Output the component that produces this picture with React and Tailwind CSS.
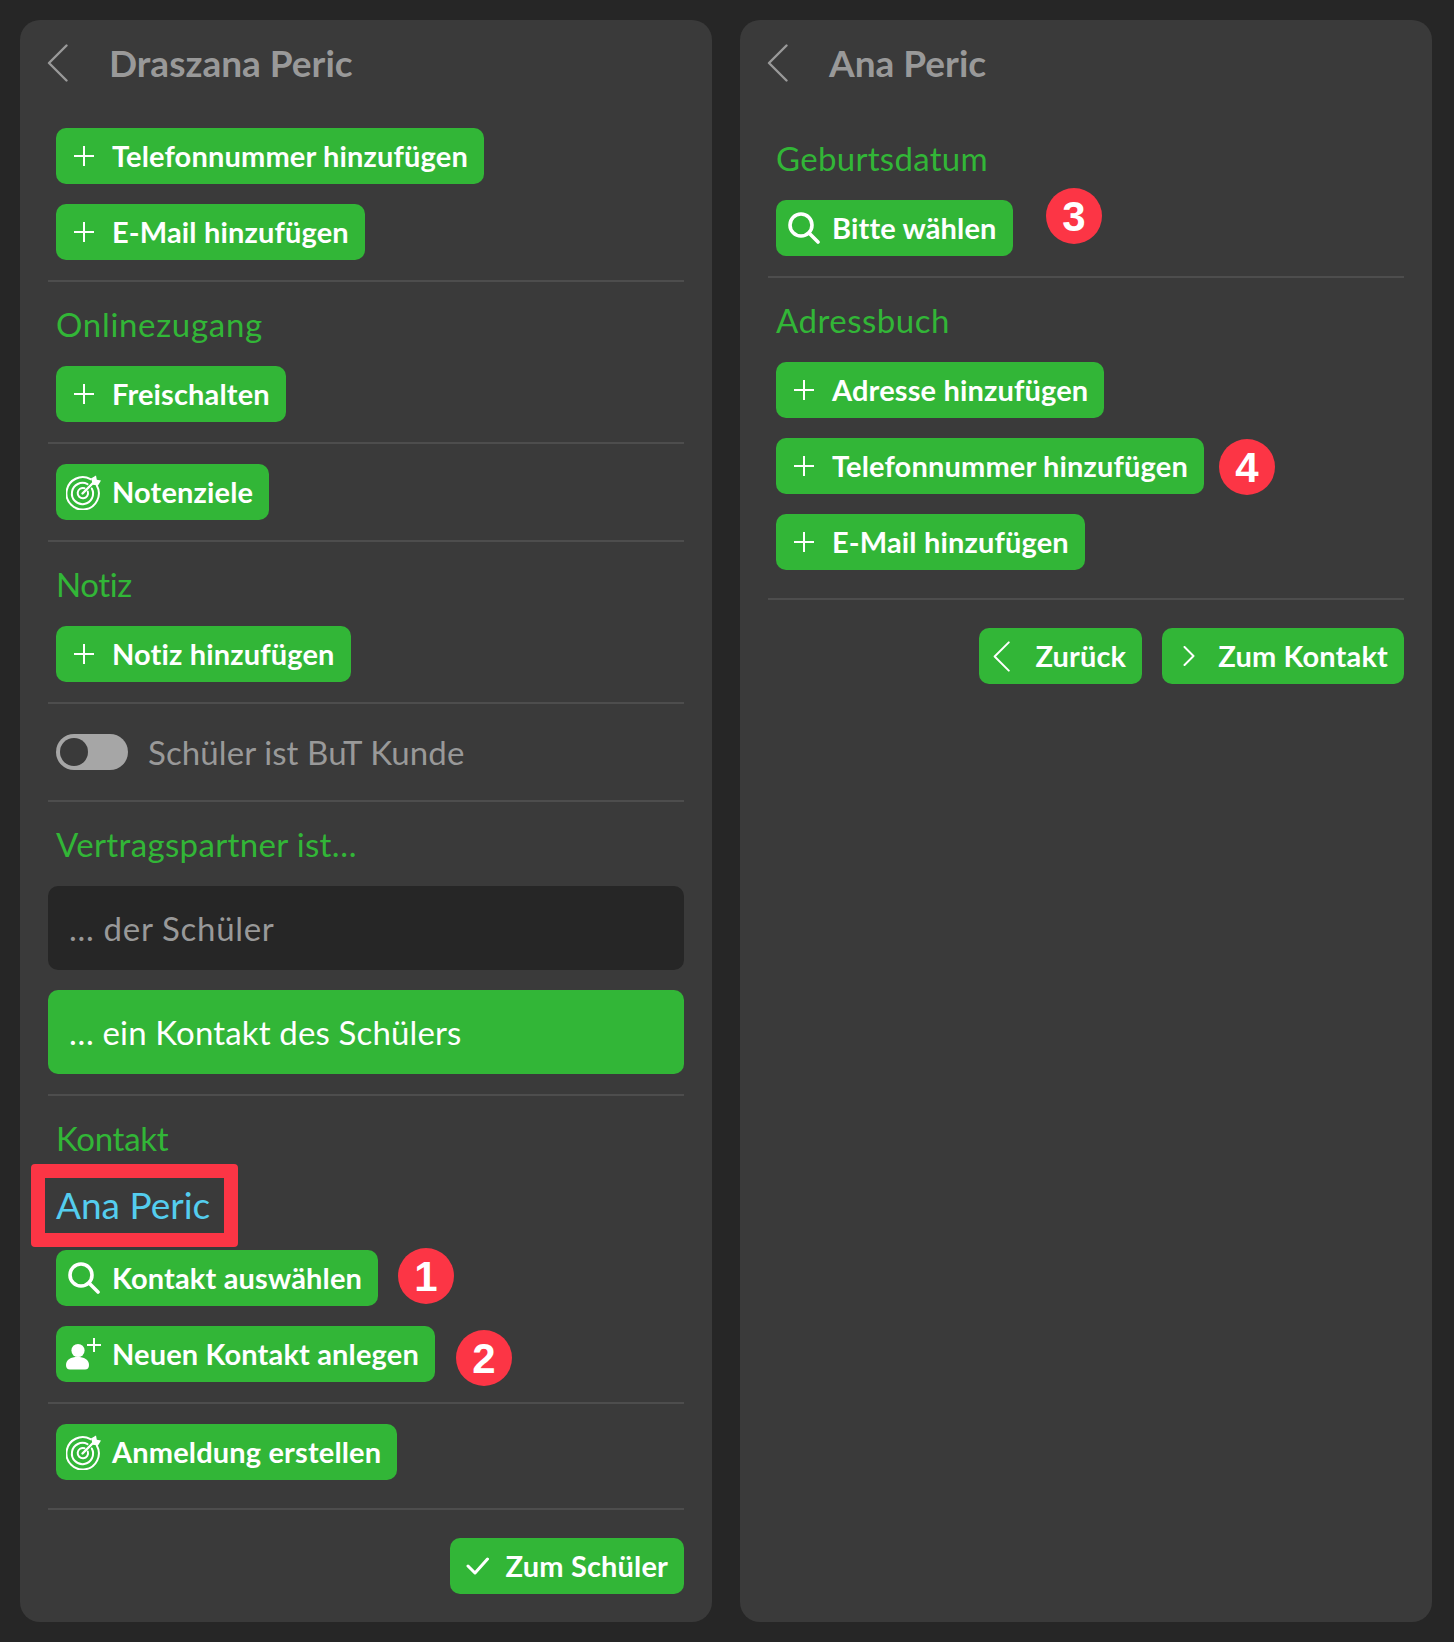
const FONT = "font-['Lato','Liberation_Sans',sans-serif]";

const Plus = () => (
  <svg width="20" height="20" viewBox="0 0 20 20" fill="none" stroke="currentColor" strokeWidth="2"><path d="M10 0v20M0 10h20" /></svg>
);
const Search = () => (
  <svg width="32" height="32" viewBox="0 0 32 32" fill="none" stroke="currentColor" strokeWidth="3.6" strokeLinecap="round"><circle cx="13" cy="13" r="11" /><path d="M21 21l9 9" /></svg>
);
const Target = () => (
  <svg width="36" height="36" viewBox="0 0 36 36" fill="none" stroke="currentColor" strokeWidth="2" strokeLinecap="round">
    <path d="M24.5 5.2A16.2 16.2 0 1 0 30.8 11.5" />
    <path d="M21.5 10.2A10.6 10.6 0 1 0 25.8 14.5" />
    <path d="M18.5 14.2A5.2 5.2 0 1 0 21.8 17.5" />
    <path d="M16.5 19.5L27 9" strokeWidth="2.4" />
    <path d="M25 4.5l5-3 .8 4.2 4.2.8-3 5-5-.8z" fill="currentColor" stroke="none" />
  </svg>
);
const UserPlus = () => (
  <svg width="36" height="32" viewBox="0 0 36 32" fill="currentColor">
    <circle cx="12" cy="12.5" r="6.6" />
    <path d="M0 27c0-5.5 5-8 11.500-8S23 21.500 23 27c0 3-1.500 4.500-4 4.500H4C1.500 31.500 0 30 0 27z" />
    <path d="M28 0v14M21 7h14" fill="none" stroke="currentColor" strokeWidth="2" />
  </svg>
);
const Back = ({ w = 21, h = 38 }) => (
  <svg width={w} height={h} viewBox="0 0 21 38" fill="none" stroke="currentColor" strokeWidth="2.4" strokeLinecap="round" strokeLinejoin="round"><path d="M19.500 1.500L2 19l17.500 17.500" /></svg>
);
const Forward = () => (
  <svg width="12" height="20" viewBox="0 0 12 20" fill="none" stroke="currentColor" strokeWidth="2" strokeLinecap="round" strokeLinejoin="round"><path d="M1.500 1l9 9-9 9" /></svg>
);
const Check = () => (
  <svg width="23" height="18" viewBox="0 0 23 18" fill="none" stroke="currentColor" strokeWidth="3" strokeLinecap="round" strokeLinejoin="round"><path d="M2 9l7 7L21.500 2" /></svg>
);

const Btn = ({ icon, children, iconClass = "justify-center" }) => (
  <div className="flex h-[56px] w-fit items-center rounded-[10px] bg-[#32b637] pr-[16px] text-[29px] font-bold tracking-[0.15px] whitespace-nowrap text-white">
    <span className={`flex w-[56px] shrink-0 items-center ${iconClass}`}>{icon}</span>
    <span>{children}</span>
  </div>
);

const Row = ({ icon, label, badge, badgeX, badgeY = 0 }) => (
  <div className="relative ml-[8px]">
    <Btn icon={icon}>{label}</Btn>
    {badge && <Badge x={badgeX} y={badgeY}>{badge}</Badge>}
  </div>
);

const Badge = ({ x, y, children }) => {
  return (
    <span
      className="absolute flex h-[56px] w-[56px] items-center justify-center rounded-full bg-[#fc3545] font-['Liberation_Sans',sans-serif] text-[42px] font-bold text-white"
      style={{ left: x, top: y }}
    >
      {children}
    </span>
  );
};

const Line = ({ className = "my-[20px]" }) => <div className={`h-[2px] bg-[#4d4d4d] ${className}`} />;

const Label = ({ children, className = "" }) => (
  <div className={`ml-[8px] flex h-[48px] items-center pb-[3px] text-[33px] leading-none text-[#32b637] ${className}`}>{children}</div>
);

const Header = ({ title }) => (
  <div className="flex h-[88px] items-center pb-[2px] text-[#999999]">
    <span className="ml-[27px] w-[62px]"><Back /></span>
    <span className="text-[37px] font-bold">{title}</span>
  </div>
);

const Panel = ({ children }) => (
  <div className="h-[1602px] w-[692px] rounded-[20px] bg-[#3a3a3a] px-[28px]">{children}</div>
);

export default function App() {
  return (
    <div className={`flex h-[1642px] w-[1454px] gap-[28px] bg-[#262626] p-[20px] ${FONT}`}>
      <Panel>
        <div className="-mx-[28px]"><Header title="Draszana Peric" /></div>
        <div className="mt-[20px] flex flex-col gap-[20px]">
          <Row icon={<Plus />} label="Telefonnummer hinzufügen" />
          <Row icon={<Plus />} label="E-Mail hinzufügen" />
        </div>
        <Line />
        <Label className="tracking-[0.7px]">Onlinezugang</Label>
        <div className="mt-[16px]"><Row icon={<Plus />} label="Freischalten" /></div>
        <Line />
        <Row icon={<Target />} label="Notenziele" />
        <Line />
        <Label className="-tracking-[0.4px]">Notiz</Label>
        <div className="mt-[16px]"><Row icon={<Plus />} label="Notiz hinzufügen" /></div>
        <Line />
        <div className="ml-[8px] flex h-[56px] items-center gap-[20px]">
          <div className="flex h-[36px] w-[72px] items-center rounded-full bg-[#a6a6a6] pl-[4px]">
            <div className="h-[28px] w-[28px] rounded-full bg-[#3a3a3a]" />
          </div>
          <span className="pt-[1px] text-[33px] tracking-[0.1px] text-[#999999]">Schüler ist BuT Kunde</span>
        </div>
        <Line />
        <Label className="tracking-[0.35px]">Vertragspartner ist…</Label>
        <div className="mt-[16px] flex h-[84px] items-center rounded-[10px] bg-[#262626] pt-[2px] pl-[21px] text-[33px] tracking-[0.7px] text-[#999999]">… der Schüler</div>
        <div className="mt-[20px] flex h-[84px] items-center rounded-[10px] bg-[#32b637] pt-[2px] pl-[21px] text-[33px] tracking-[0.15px] text-white">… ein Kontakt des Schülers</div>
        <Line />
        <Label className="-tracking-[0.3px]">Kontakt</Label>
        <div className="relative ml-[8px] flex h-[86px] items-center pb-[5px] text-[37px] text-[#54cdee]">
          Ana Peric
          <div className="absolute -left-[25px] top-0 h-[83px] w-[207px] rounded-[4px] border-[14px] border-[#fc3545]" />
        </div>
        <div className="flex flex-col gap-[20px]">
          <Row icon={<Search />} label="Kontakt auswählen" badge="1" badgeX={342} badgeY={-2} />
          <Row icon={<UserPlus />} label="Neuen Kontakt anlegen" badge="2" badgeX={400} badgeY={4} />
        </div>
        <Line />
        <Row icon={<Target />} label="Anmeldung erstellen" />
        <Line className="my-[28px]" />
        <div className="flex justify-end"><Btn icon={<Check />}>Zum Schüler</Btn></div>
      </Panel>
      <Panel>
        <div className="-mx-[28px]"><Header title="Ana Peric" /></div>
        <Label className="mt-[28px] tracking-[0.3px]">Geburtsdatum</Label>
        <div className="mt-[16px]"><Row icon={<Search />} label="Bitte wählen" badge="3" badgeX={270} badgeY={-12} /></div>
        <Line />
        <Label className="tracking-[0.5px]">Adressbuch</Label>
        <div className="mt-[16px] flex flex-col gap-[20px]">
          <Row icon={<Plus />} label="Adresse hinzufügen" />
          <Row icon={<Plus />} label="Telefonnummer hinzufügen" badge="4" badgeX={443} badgeY={1} />
          <Row icon={<Plus />} label="E-Mail hinzufügen" />
        </div>
        <Line className="my-[28px]" />
        <div className="flex justify-end gap-[20px]">
          <Btn iconClass="pl-[14px]" icon={<Back w={17} h={31} />}>Zurück</Btn>
          <Btn iconClass="pl-[21px]" icon={<Forward />}>Zum Kontakt</Btn>
        </div>
      </Panel>
    </div>
  );
}
